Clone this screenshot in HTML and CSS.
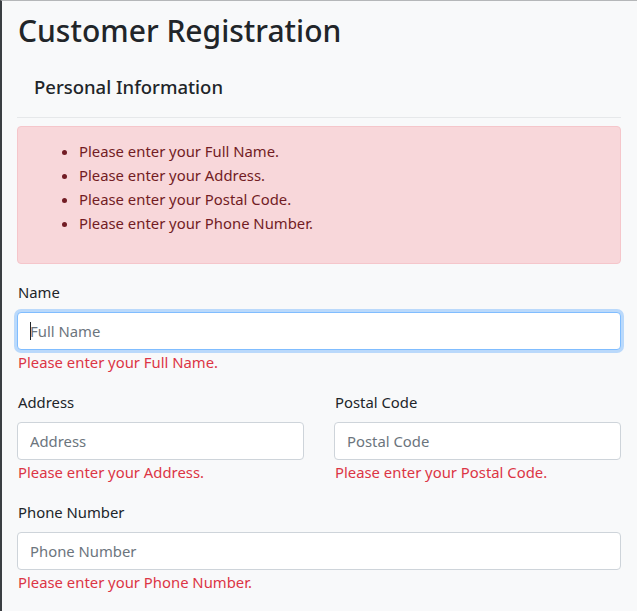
FILE: index.html
```html
<!DOCTYPE html>
<html lang="en">
<head>
<meta charset="utf-8">
<title>Customer Registration</title>
<link rel="stylesheet" href="styles.css">
</head>
<body>
<div class="page">
  <h1 class="title">Customer Registration</h1>
  <div class="section-head">
    <h5 class="section-title">Personal Information</h5>
  </div>
  <div class="alert">
    <ul class="alert-list">
      <li>Please enter your Full Name.</li>
      <li>Please enter your Address.</li>
      <li>Please enter your Postal Code.</li>
      <li>Please enter your Phone Number.</li>
    </ul>
  </div>
  <form class="form">
    <div class="group">
      <label class="label" for="name">Name</label>
      <div class="field-wrap">
        <input id="name" class="input focus" type="text" placeholder="Full Name">
        <span class="caret"></span>
      </div>
      <div class="feedback">Please enter your Full Name.</div>
    </div>
    <div class="row">
      <div class="group">
        <label class="label" for="address">Address</label>
        <input id="address" class="input" type="text" placeholder="Address">
        <div class="feedback">Please enter your Address.</div>
      </div>
      <div class="group">
        <label class="label" for="postal">Postal Code</label>
        <input id="postal" class="input" type="text" placeholder="Postal Code">
        <div class="feedback">Please enter your Postal Code.</div>
      </div>
    </div>
    <div class="group">
      <label class="label" for="phone">Phone Number</label>
      <input id="phone" class="input" type="text" placeholder="Phone Number">
      <div class="feedback">Please enter your Phone Number.</div>
    </div>
  </form>
</div>
</body>
</html>
```
FILE: styles.css
```css
* { box-sizing: border-box; }
html, body { margin: 0; padding: 0; }
body {
  background: #f8f9fa;
  font-family: "Noto Sans", "Open Sans", sans-serif;
  font-size: 14.85px;
  line-height: 24px;
  color: #212529;
  border-left: 2px solid #3a3e42;
  border-top: 1px solid #b5b7b9;
  min-height: 611px;
}
.page {
  padding: 0 16px 0 15px;
}
.title {
  margin: 8px 0 0;
  font-size: 30px;
  line-height: 43px;
  font-weight: 500;
  padding-left: 1px;
}
.section-head {
  padding: 23px 16px 18px;
  border-bottom: 1px solid #e6e8ea;
}
.section-title {
  margin: 0;
  font-size: 18.5px;
  line-height: 24px;
  font-weight: 500;
  padding-left: 1px;
}
.alert {
  margin-top: 8px;
  background: #f8d7da;
  border: 1px solid #f5c6cb;
  border-radius: 4px;
  color: #721c24;
  padding: 12px 20px;
}
.alert-list {
  margin: 0 0 16px;
  padding-left: 41px;
}
.form {
  margin-top: 16px;
}
.group {
  margin-bottom: 16px;
  min-width: 0;
}
.row {
  display: grid;
  grid-template-columns: 1fr 1fr;
  column-gap: 30px;
}
.label {
  display: block;
  margin-bottom: 8px;
  padding-left: 1px;
}
.field-wrap {
  position: relative;
}
.input {
  display: block;
  width: 100%;
  height: 38px;
  padding: 6px 12px;
  font-family: inherit;
  font-size: 14.85px;
  line-height: 24px;
  color: #495057;
  background: #fff;
  border: 1px solid #ced4da;
  border-radius: 4px;
  outline: none;
}
.input::placeholder {
  color: #6c757d;
  opacity: 1;
}
.input.focus {
  border-color: #80bdff;
  box-shadow: 0 0 0 3px rgba(0, 123, 255, 0.25);
}
.caret {
  position: absolute;
  left: 13px;
  top: 10px;
  width: 1px;
  height: 18px;
  background: #212529;
}
.feedback {
  color: #dc3545;
  padding-left: 1px;
}
```
